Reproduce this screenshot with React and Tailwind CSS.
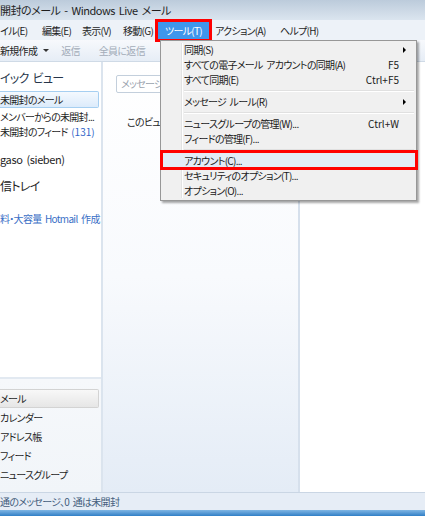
import React from 'react';

const jp = "font-['Noto_Sans_CJK_JP',sans-serif] [font-feature-settings:'palt'] tracking-[-0.7px] [word-spacing:2px]";

const menuItems = [
    { label: '同期(S)', arrow: true },
    { label: 'すべての電子メール アカウントの同期(A)', key: 'F5' },
    { label: 'すべて同期(E)', key: 'Ctrl+F5' },
    'sep',
    { label: 'メッセージ ルール(R)', arrow: true },
    'sep',
    { label: 'ニュースグループの管理(W)...', key: 'Ctrl+W' },
    { label: 'フィードの管理(F)...' },
    'sep',
    { label: 'アカウント(C)...', active: true },
    { label: 'セキュリティのオプション(T)...' },
    { label: 'オプション(O)...' },
];

const ToolsMenu = () => (
    <div className="absolute left-[160px] top-[40px] w-[257px] bg-[#f0f0f0] border border-[#979797] shadow-[2px_2px_2px_rgba(0,0,0,0.35)] pt-px pb-[2px] z-10">
        {/* gutter line */}
        <div className="absolute left-[20px] top-[2px] bottom-[2px] w-[2px] border-l border-[#e2e3e3] border-r border-r-white" />
        {menuItems.map((item, i) =>
            item === 'sep' ? (
                <div key={i} className="h-[7px] flex items-center pl-[23px] pr-[2px]">
                    <div className="w-full h-[2px] border-t border-[#e0e0e0] border-b border-b-white" />
                </div>
            ) : (
                <div
                    key={i}
                    className={`relative h-[15px] flex items-center pl-[23px] pr-[17px] text-[10px] text-[#1a1a1a] ${item.active ? 'bg-[#e3ebf5]' : ''}`}
                >
                    <span className="flex-1 whitespace-nowrap">{item.label}</span>
                    {item.key && <span className="whitespace-nowrap tracking-normal">{item.key}</span>}
                    {item.arrow && (
                        <span className="absolute right-[10px] top-[5px] w-0 h-0 border-y-[3px] border-y-transparent border-l-[3px] border-l-black" />
                    )}
                    {item.active && (
                        <div className="absolute -left-px -right-[2px] -top-[3px] -bottom-[2px] border-[3px] border-[#ff0000]" />
                    )}
                </div>
            )
        )}
    </div>
);

const App = () => {
    return (
        <div className={`relative w-[425px] h-[516px] overflow-hidden bg-white ${jp}`}>
            {/* Title bar */}
            <div className="h-[20px] bg-gradient-to-b from-[#bccbdb] to-[#dbe5ef] flex items-center text-[11px] tracking-[-0.5px] text-[#1e1e1e] whitespace-nowrap">
                開封のメール - Windows Live メール
            </div>

            {/* Menu bar */}
            <div className="relative h-[20px] bg-[#edf2f8] flex items-center text-[10px] text-[#1e1e1e] whitespace-nowrap">
                <span className="w-[42px]">イル(E)</span>
                <span className="w-[40px]">編集(E)</span>
                <span className="w-[41px]">表示(V)</span>
                <span className="w-[33px]">移動(G)</span>
                <span className="relative h-[20px] w-[55px] flex items-center justify-center bg-[#3f96ec] text-white">
                    ツール(T)
                    <span className="absolute -left-px -right-px -top-px -bottom-[2px] border-[3px] border-[#ff0000]" />
                </span>
                <span className="ml-[4px] w-[65px]">アクション(A)</span>
                <span>ヘルプ(H)</span>
            </div>

            {/* Toolbar */}
            <div className="h-[22px] bg-gradient-to-b from-[#f7f9fc] to-[#e6edf6] border-b border-[#cfdae6] flex items-center text-[10px] whitespace-nowrap">
                <span className="text-[#1e1e1e]">新規作成</span>
                <span className="ml-[6px] w-0 h-0 border-x-[3px] border-x-transparent border-t-[3px] border-t-[#333]" />
                <span className="ml-[12px] text-[#a3acb8]">返信</span>
                <span className="ml-[19px] text-[#a3acb8]">全員に返信</span>
            </div>

            {/* Main area */}
            <div className="flex h-[430px]">
                {/* Folder pane */}
                <div className="w-[103px] flex flex-col border-r-2 border-[#dbe4ee]">
                    <div className="flex-1 bg-white whitespace-nowrap">
                        <div className="mt-[8px] h-[16px] leading-[16px] text-[12px] text-[#26354a]">イック ビュー</div>
                        <div className="mt-[5px] mr-[2px] h-[17px] leading-[15px] text-[10px] text-[#1e1e1e] bg-gradient-to-b from-[#f4f9fe] to-[#dcebfb] border border-l-0 border-[#a6cff1] rounded-r-[2px]">
                            未開封のメール
                        </div>
                        <div className="mt-px h-[15px] leading-[15px] text-[10px] text-[#1e1e1e]">メンバーからの未開封...</div>
                        <div className="h-[15px] leading-[15px] text-[10px] text-[#1e1e1e]">
                            未開封のフィード <span className="text-[#3166c8] tracking-normal">(131)</span>
                        </div>
                        <div className="mt-[11px] h-[18px] leading-[18px] text-[11px] tracking-[-0.4px] text-[#1e1e1e]">gaso (sieben)</div>
                        <div className="mt-[9px] h-[18px] leading-[18px] text-[12px] text-[#1e1e1e]">信トレイ</div>
                        <div className="mt-[16px] h-[15px] leading-[15px] text-[10px] text-[#3a6fc6]">料・大容量 Hotmail 作成</div>
                    </div>
                    <div className="h-[115px] bg-gradient-to-b from-[#f6f8fb] to-[#f1f5f9] border-t-2 border-[#e2e9f1] pt-[10px] text-[10px] text-[#1e1e1e] whitespace-nowrap">
                        <div className="mr-[2px] h-[19px] leading-[17px] bg-gradient-to-b from-[#f8f8f8] to-[#e6e6e6] border border-l-0 border-[#d3d3d3] rounded-r-[2px]">メール</div>
                        <div className="h-[19px] leading-[19px]">カレンダー</div>
                        <div className="h-[19px] leading-[19px]">アドレス帳</div>
                        <div className="h-[19px] leading-[19px]">フィード</div>
                        <div className="h-[19px] leading-[19px]">ニュースグループ</div>
                    </div>
                </div>

                {/* Message list */}
                <div className="w-[197px] border-r-2 border-[#d6e0ec] bg-gradient-to-b from-white via-[#f8fafd] to-[#e4ecf6] pt-[13px] whitespace-nowrap">
                    <div className="ml-[13px] w-[170px] h-[18px] bg-white border border-[#c3cfdc] rounded-[2px] pl-[4px] leading-[16px] text-[10px] text-[#9aa3ae]">
                        メッセージの検索
                    </div>
                    <div className="mt-[21px] ml-[24px] text-[10px] text-[#1e1e1e]">このビューには表示する項目がありません。</div>
                </div>

                {/* Reading pane */}
                <div className="flex-1 bg-white" />
            </div>

            {/* Status bar */}
            <div className="h-[18px] bg-[#e6edf6] border-t border-[#cad6e4] flex items-center text-[10px] text-[#445d7c] whitespace-nowrap">
                通のメッセージ、0 通は未開封
            </div>
            <div className="h-[6px] bg-gradient-to-b from-[#7fb6e4] to-[#2f7fc6]" />

            <ToolsMenu />
        </div>
    );
};

export default App;
